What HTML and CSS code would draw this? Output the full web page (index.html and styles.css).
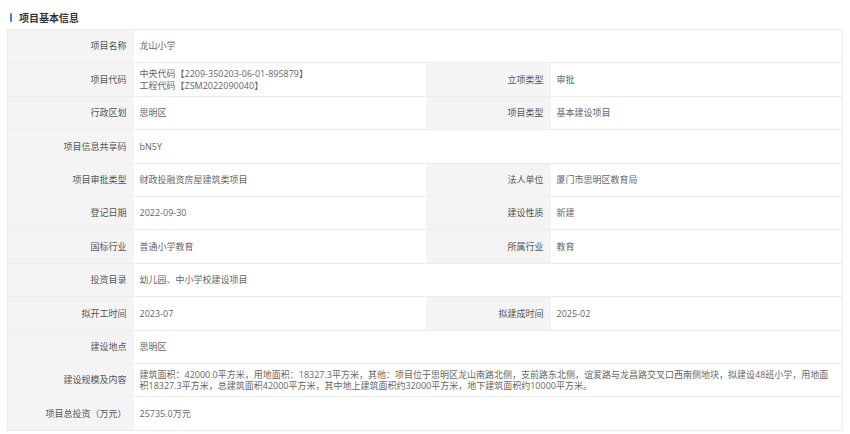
FILE: index.html
```html
<!DOCTYPE html>
<html lang="zh-CN">
<head>
<meta charset="utf-8">
<title>项目基本信息</title>
<link rel="stylesheet" href="styles.css">
</head>
<body>
<div class="page">
  <div class="section-title"><span class="bar"></span><span>项目基本信息</span></div>
  <table class="info">
    <colgroup>
      <col class="c-label"><col class="c-value"><col class="c-label2"><col class="c-value2">
    </colgroup>
    <tr><th>项目名称</th><td colspan="3">龙山小学</td></tr>
    <tr><th>项目代码</th><td><div class="line">中央代码【2209-350203-06-01-895879】</div><div class="line">工程代码【ZSM2022090040】</div></td><th>立项类型</th><td>审批</td></tr>
    <tr><th>行政区划</th><td>思明区</td><th>项目类型</th><td>基本建设项目</td></tr>
    <tr><th>项目信息共享码</th><td colspan="3">bN5Y</td></tr>
    <tr><th>项目审批类型</th><td>财政投融资房屋建筑类项目</td><th>法人单位</th><td>厦门市思明区教育局</td></tr>
    <tr><th>登记日期</th><td>2022-09-30</td><th>建设性质</th><td>新建</td></tr>
    <tr><th>国标行业</th><td>普通小学教育</td><th>所属行业</th><td>教育</td></tr>
    <tr><th>投资目录</th><td colspan="3">幼儿园、中小学校建设项目</td></tr>
    <tr><th>拟开工时间</th><td>2023-07</td><th>拟建成时间</th><td>2025-02</td></tr>
    <tr><th>建设地点</th><td colspan="3">思明区</td></tr>
    <tr><th>建设规模及内容</th><td colspan="3">建筑面积：42000.0平方米，用地面积：18327.3平方米，其他：项目位于思明区龙山南路北侧，支前路东北侧，谊爱路与龙昌路交叉口西南侧地块，拟建设48班小学，用地面积18327.3平方米，总建筑面积42000平方米，其中地上建筑面积约32000平方米，地下建筑面积约10000平方米。</td></tr>
    <tr><th>项目总投资（万元）</th><td colspan="3">25735.0万元</td></tr>
  </table>
</div>
</body>
</html>
```

FILE: styles.css
```css
* { box-sizing: border-box; }
html, body {
  margin: 0;
  padding: 0;
  background: #ffffff;
}
body {
  font-family: "Open Sans", "Noto Sans CJK SC", sans-serif;
  font-size: 9px;
  color: #666;
}
.page {
  padding: 11px 8px 0 7px;
}
.section-title {
  display: flex;
  align-items: center;
  gap: 7px;
  height: 12px;
  padding-left: 3px;
  font-family: "Noto Sans CJK SC", sans-serif;
  font-size: 10px;
  font-weight: 700;
  color: #333;
  margin-bottom: 6px;
}
.section-title .bar {
  display: block;
  width: 2px;
  height: 9px;
  background: #4a7bf7;
  border-radius: 1px;
}
.info {
  width: 835px;
  border-collapse: collapse;
  table-layout: fixed;
  border: 1px solid #ededed;
}
.c-label { width: 126px; }
.c-value { width: 292px; }
.c-label2 { width: 125px; }
.c-value2 { width: 292px; }
.info tr {
  height: 33.4px;
  border-top: 1px solid #ededed;
}
.info th, .info td {
  padding: 0 6px;
  line-height: 11.5px;
  vertical-align: middle;
  font-family: "Open Sans", "Noto Sans CJK SC", sans-serif;
  font-size: 9px;
}
.info td .line {
  height: 11.5px;
  white-space: nowrap;
}
.info th {
  background: #f4f4f4;
  font-weight: 400;
  text-align: right;
  color: #555;
  padding-right: 7px;
}
.info td {
  background: #fff;
  text-align: left;
  color: #666;
}
```
